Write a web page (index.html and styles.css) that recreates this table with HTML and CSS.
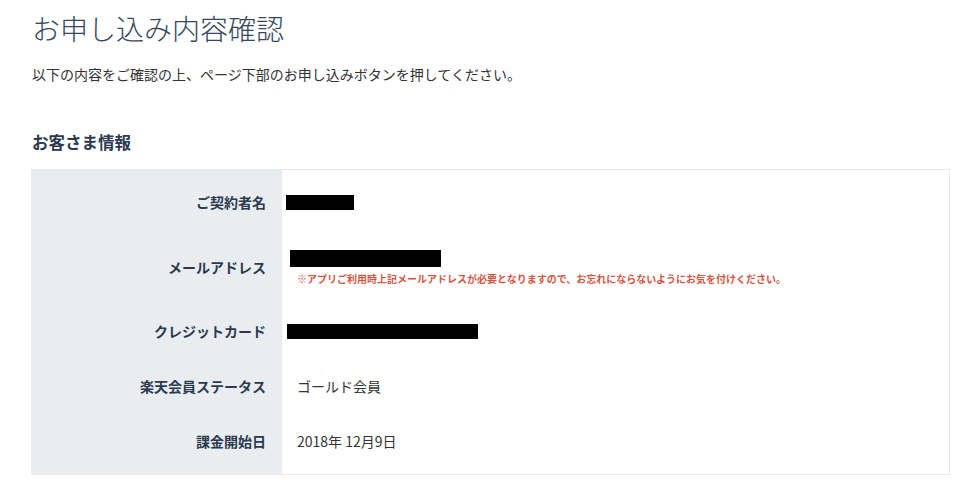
FILE: index.html
```html
<!DOCTYPE html>
<html lang="ja">
<head>
    <meta charset="UTF-8">
    <meta name="viewport" content="width=device-width, initial-scale=1.0">
    <title>お申し込み内容確認</title>
    <link rel="stylesheet" href="styles.css">
</head>
<body>
    <main class="page">
        <h1 class="page-title">お申し込み内容確認</h1>
        <p class="lead">以下の内容をご確認の上、ページ下部のお申し込みボタンを押してください。</p>

        <!-- Customer info -->
        <section class="section">
            <h2 class="section-title">お客さま情報</h2>
            <table class="info-table">
                <tr>
                    <th>ご契約者名</th>
                    <td><span class="redacted redacted-name"></span></td>
                </tr>
                <tr class="row-mail">
                    <th>メールアドレス</th>
                    <td>
                        <span class="redacted redacted-mail"></span>
                        <p class="note">※アプリご利用時上記メールアドレスが必要となりますので、お忘れにならないようにお気を付けください。</p>
                    </td>
                </tr>
                <tr>
                    <th>クレジットカード</th>
                    <td><span class="redacted redacted-card"></span></td>
                </tr>
                <tr>
                    <th>楽天会員ステータス</th>
                    <td>ゴールド会員</td>
                </tr>
                <tr>
                    <th>課金開始日</th>
                    <td>2018年 12月9日</td>
                </tr>
            </table>
        </section>
    </main>
</body>
</html>
```

FILE: styles.css
```css
/* Base */
body {
    margin: 0;
    padding: 0;
    background: #fff;
    color: #333;
    font-family: "Noto Sans CJK JP", "Noto Sans", sans-serif;
}

.page {
    padding: 10px 28px 20px 31px;
}

/* Headings */
.page-title {
    margin: 0 0 0 1px;
    font-size: 28px;
    line-height: 36px;
    font-weight: 300;
    color: #34475d;
}

.lead {
    margin: 18px 0 0 1px;
    font-size: 14px;
    line-height: 20px;
    color: #333;
}

.section {
    margin-top: 46px;
}

.section-title {
    margin: 0 0 15px 1px;
    font-size: 16.5px;
    line-height: 24px;
    font-weight: 700;
    color: #2b3a50;
}

/* Info table */
.info-table {
    width: 919px;
    border-collapse: collapse;
    border: 1px solid #e8e9eb;
}

.info-table th,
.info-table td {
    padding: 20px 15px;
    font-size: 14px;
    line-height: 15px;
    vertical-align: middle;
}

.info-table th {
    width: 234px;
    padding-left: 0;
    padding-right: 16px;
    text-align: right;
    font-weight: 700;
    color: #2b3a50;
    background: #eaedf0;
}

.info-table td {
    text-align: left;
    color: #333;
}

.info-table tr:first-child th,
.info-table tr:first-child td {
    padding-top: 25px;
}

.info-table tr:last-child th,
.info-table tr:last-child td {
    padding-bottom: 25px;
}

.info-table .row-mail td {
    padding-bottom: 17px;
}

/* Masked values */
.redacted {
    display: block;
    background: #000;
}

.redacted-name {
    width: 68px;
    height: 15px;
    margin-left: -11px;
}

.redacted-mail {
    width: 151px;
    height: 17px;
    margin-left: -7px;
}

.redacted-card {
    width: 191px;
    height: 15px;
    margin-left: -10px;
}

.note {
    margin: 4px 0 0;
    font-size: 10px;
    line-height: 16px;
    font-weight: 700;
    color: #d4553f;
}
```
